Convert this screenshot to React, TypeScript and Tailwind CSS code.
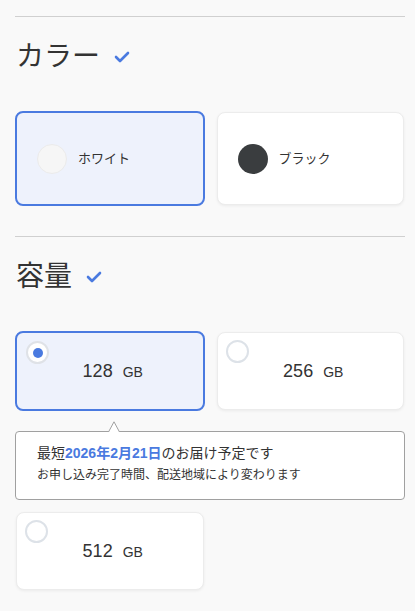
import React from "react";

const font = { fontFamily: '"Liberation Sans", "Noto Sans CJK JP", sans-serif' };

function Check() {
  return (
    <svg width="16" height="12" viewBox="0 0 16 12" className="ml-[14px]">
      <polyline points="2,6 6,10 14,2" fill="none" stroke="#4a7ae0" strokeWidth="2.6" strokeLinecap="round" strokeLinejoin="round" />
    </svg>
  );
}

function Heading({ label }: { label: string }) {
  return (
    <div className="flex items-center h-[40px] mt-[20px] pl-[1px]">
      <span className="text-[28px] leading-[40px] text-[#333]">{label}</span>
      <Check />
    </div>
  );
}

function ColorCard({ label, swatch, selected }: { label: string; swatch: string; selected?: boolean }) {
  return (
    <div
      className={
        selected
          ? "h-[95px] rounded-[8px] border-2 border-[#4a7ae0] bg-[#eef2fc] flex items-center pl-[20px]"
          : "h-[93px] m-[1px] rounded-[8px] border border-[#ececec] bg-white shadow-[0_1px_3px_rgba(0,0,0,0.06)] flex items-center pl-[20px]"
      }
    >
      <div className={swatch}></div>
      <span className="ml-[11px] text-[13px] text-[#333]">{label}</span>
    </div>
  );
}

function CapCard({ value, selected }: { value: string; selected?: boolean }) {
  return (
    <div
      className={
        selected
          ? "relative h-[80px] rounded-[8px] border-2 border-[#4a7ae0] bg-[#eef2fc] flex items-center justify-center"
          : "relative h-[78px] m-[1px] rounded-[8px] border border-[#ececec] bg-white shadow-[0_1px_3px_rgba(0,0,0,0.06)] flex items-center justify-center"
      }
    >
      <div
        className={
          selected
            ? "absolute left-[9px] top-[8px] w-[23px] h-[23px] rounded-full border-2 border-[#dfe2e7] bg-white flex items-center justify-center"
            : "absolute left-[8px] top-[7px] w-[23px] h-[23px] rounded-full border-2 border-[#dde2e8] bg-white"
        }
      >
        {selected && <div className="w-[10px] h-[10px] rounded-full bg-[#4a7ae0]"></div>}
      </div>
      <div className="flex items-baseline text-[#333] ml-[6px]">
        <span className="text-[18px]">{value}</span>
        <span className="text-[14px] ml-[10px]">GB</span>
      </div>
    </div>
  );
}

export default function App() {
  return (
    <div className="h-[611px] overflow-hidden bg-[#f9f9f9] pl-[15px] pr-[10px] pt-[16px]" style={font}>
      <div className="border-t border-[#d0d0d0]"></div>
      <Heading label="カラー" />
      <div className="grid grid-cols-2 gap-[11px] mt-[34px]">
        <ColorCard
          label="ホワイト"
          selected
          swatch="w-[30px] h-[30px] rounded-full bg-[#f6f6f6] border border-[#ebebeb]"
        />
        <ColorCard label="ブラック" swatch="w-[30px] h-[30px] rounded-full bg-[#3a3d3f]" />
      </div>
      <div className="border-t border-[#d0d0d0] mt-[30px]"></div>
      <Heading label="容量" />
      <div className="grid grid-cols-2 gap-[11px] mt-[34px]">
        <CapCard value="128" selected />
        <CapCard value="256" />
      </div>
      <div className="relative mt-[20px] rounded-[4px] border border-[#a0a0a0] bg-white pl-[21px] pt-[10px] pb-[13px]">
        <svg width="12" height="11" viewBox="0 0 12 11" className="absolute left-[92px] top-[-11px]">
          <polygon points="0.5,11 6,0.8 11.5,11" fill="white" />
          <polyline points="0.5,11 6,0.8 11.5,11" fill="none" stroke="#a0a0a0" strokeWidth="1" />
        </svg>
        <div className="text-[14px] leading-[22px] text-[#333]">
          最短<span className="font-bold text-[#4a7ae0]">2026年2月21日</span>のお届け予定です
        </div>
        <div className="text-[12px] leading-[22px] text-[#333]">お申し込み完了時間、配送地域により変わります</div>
      </div>
      <div className="grid grid-cols-2 gap-[11px] mt-[11px]">
        <CapCard value="512" />
      </div>
    </div>
  );
}
